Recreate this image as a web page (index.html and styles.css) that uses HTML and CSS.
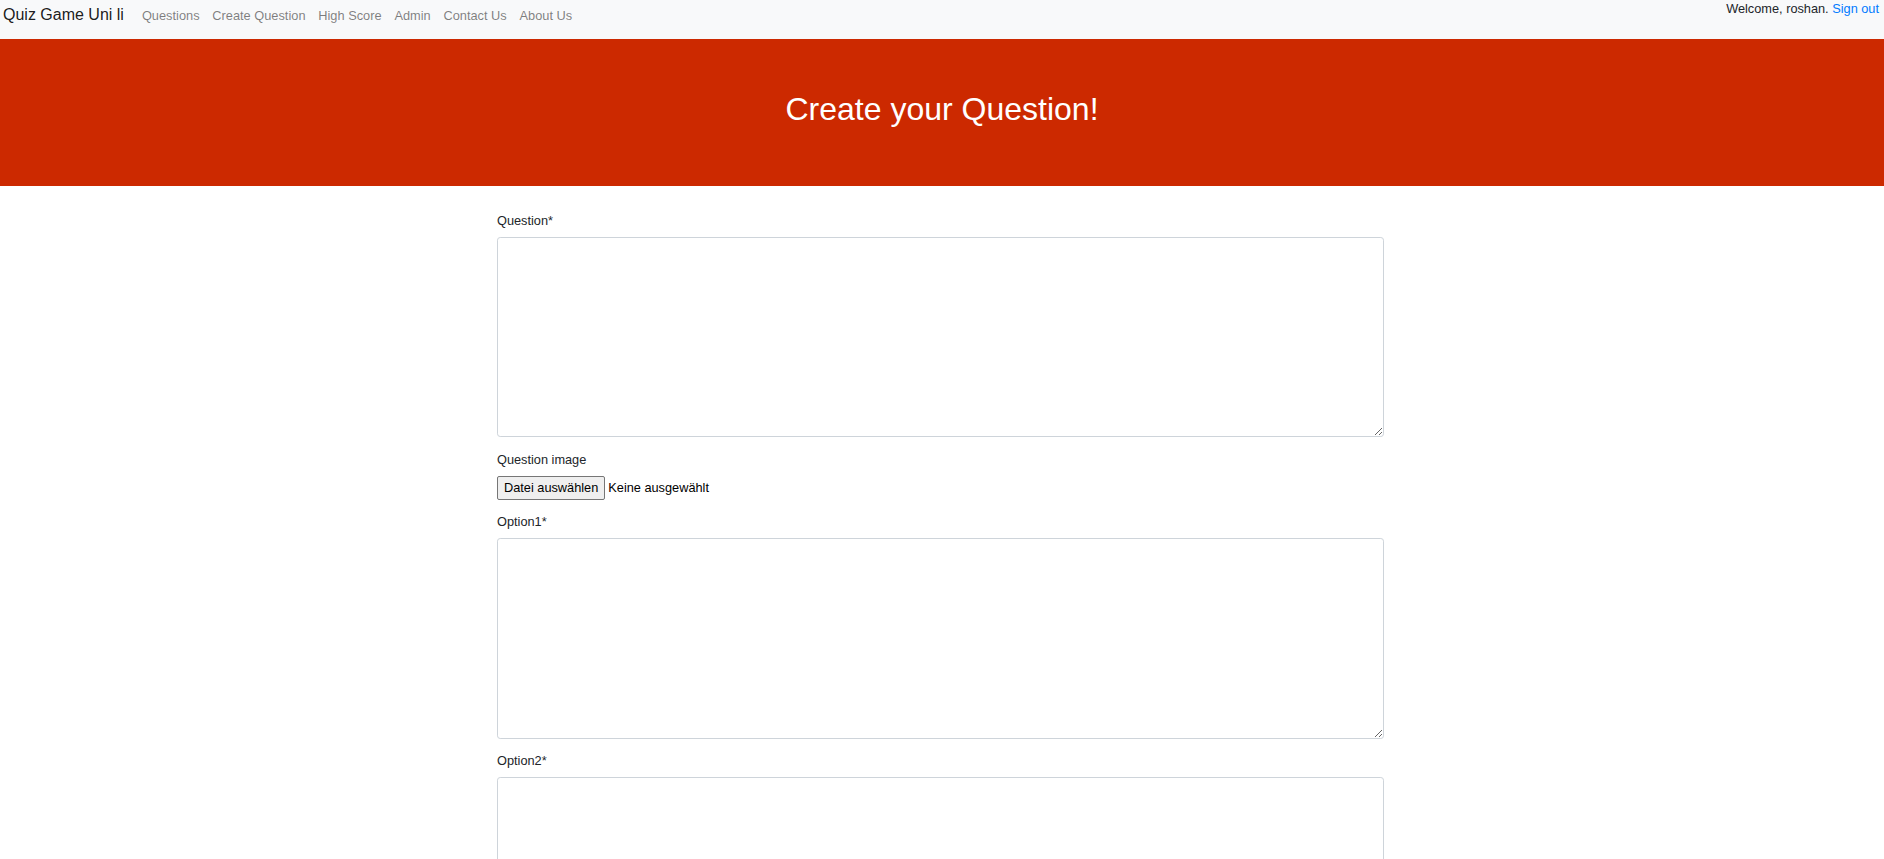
FILE: index.html
```html
<!DOCTYPE html>
<html lang="en">
<head>
<meta charset="utf-8">
<title>Create Question</title>
<link rel="stylesheet" href="styles.css">
</head>
<body>
<nav class="navbar">
  <div class="nav-left">
    <a class="brand" href="#">Quiz Game Uni li</a>
    <a class="nav-link" href="#">Questions</a>
    <a class="nav-link" href="#">Create Question</a>
    <a class="nav-link" href="#">High Score</a>
    <a class="nav-link" href="#">Admin</a>
    <a class="nav-link" href="#">Contact Us</a>
    <a class="nav-link" href="#">About Us</a>
  </div>
  <div class="nav-right">Welcome, roshan. <a class="signout" href="#">Sign out</a></div>
</nav>
<header class="hero">
  <h1 class="hero-title">Create your Question!</h1>
</header>
<main class="container">
  <form class="form">
    <div class="form-group">
      <label class="label">Question*</label>
      <textarea class="textarea"></textarea>
    </div>
    <div class="form-group">
      <label class="label">Question image</label>
      <div class="file-row">
        <button type="button" class="file-btn">Datei auswählen</button>
        <span class="file-name">Keine ausgewählt</span>
      </div>
    </div>
    <div class="form-group">
      <label class="label">Option1*</label>
      <textarea class="textarea"></textarea>
    </div>
    <div class="form-group">
      <label class="label">Option2*</label>
      <textarea class="textarea"></textarea>
    </div>
    <div class="form-group">
      <label class="label">Option3*</label>
      <textarea class="textarea"></textarea>
    </div>
    <div class="form-group">
      <label class="label">Option4*</label>
      <textarea class="textarea"></textarea>
    </div>
  </form>
</main>
</body>
</html>
```

FILE: styles.css
```css
html, body {
  margin: 0;
  padding: 0;
}
body {
  font-family: "Liberation Sans", Arial, sans-serif;
  font-size: 12.8px;
  color: #212529;
  background: #ffffff;
}
a {
  text-decoration: none;
}
.navbar {
  display: flex;
  justify-content: space-between;
  align-items: flex-start;
  height: 39px;
  box-sizing: border-box;
  background: #f8f9fa;
}
.nav-left {
  display: flex;
  align-items: baseline;
  padding-top: 3px;
  padding-left: 3px;
}
.brand {
  font-size: 16px;
  line-height: 24px;
  color: rgba(0, 0, 0, 0.9);
  margin-right: 11.6px;
}
.nav-link {
  font-size: 12.8px;
  line-height: 19.2px;
  color: rgba(0, 0, 0, 0.5);
  padding: 0 6.4px;
}
.nav-right {
  font-size: 12.75px;
  line-height: 18px;
  padding-right: 5px;
  color: #212529;
}
.signout {
  color: #007bff;
}
.hero {
  background: #cc2900;
  padding: 51.2px 16px 57.6px;
  text-align: center;
}
.hero-title {
  margin: 0;
  font-size: 32px;
  line-height: 38.4px;
  font-weight: 400;
  color: #ffffff;
}
.container {
  width: 887px;
  margin-top: 25px;
  margin-left: calc(50% - 445px);
}
.form {
  display: flex;
  flex-direction: column;
}
.form-group {
  display: flex;
  flex-direction: column;
  align-items: flex-start;
  margin-bottom: 12.8px;
}
.label {
  font-size: 12.75px;
  line-height: 19.2px;
  margin-bottom: 6.4px;
}
.textarea {
  display: block;
  width: 100%;
  height: 200.5px;
  box-sizing: border-box;
  border: 1px solid #ced4da;
  border-radius: 3.2px;
  background: #ffffff;
  padding: 5px 9.6px;
  font-family: "Liberation Sans", Arial, sans-serif;
  font-size: 12.8px;
  resize: vertical;
  margin: 0;
}
.file-row {
  display: flex;
  align-items: center;
  gap: 3px;
  height: 24px;
}
.file-btn {
  height: 24px;
  box-sizing: border-box;
  padding: 0 6px;
  margin: 0;
  font-family: "Liberation Sans", Arial, sans-serif;
  font-size: 12.75px;
  color: #000000;
  background: #efefef;
  border: 1px solid #767676;
  border-radius: 2px;
}
.file-name {
  font-size: 12.75px;
  color: #000000;
}
```
